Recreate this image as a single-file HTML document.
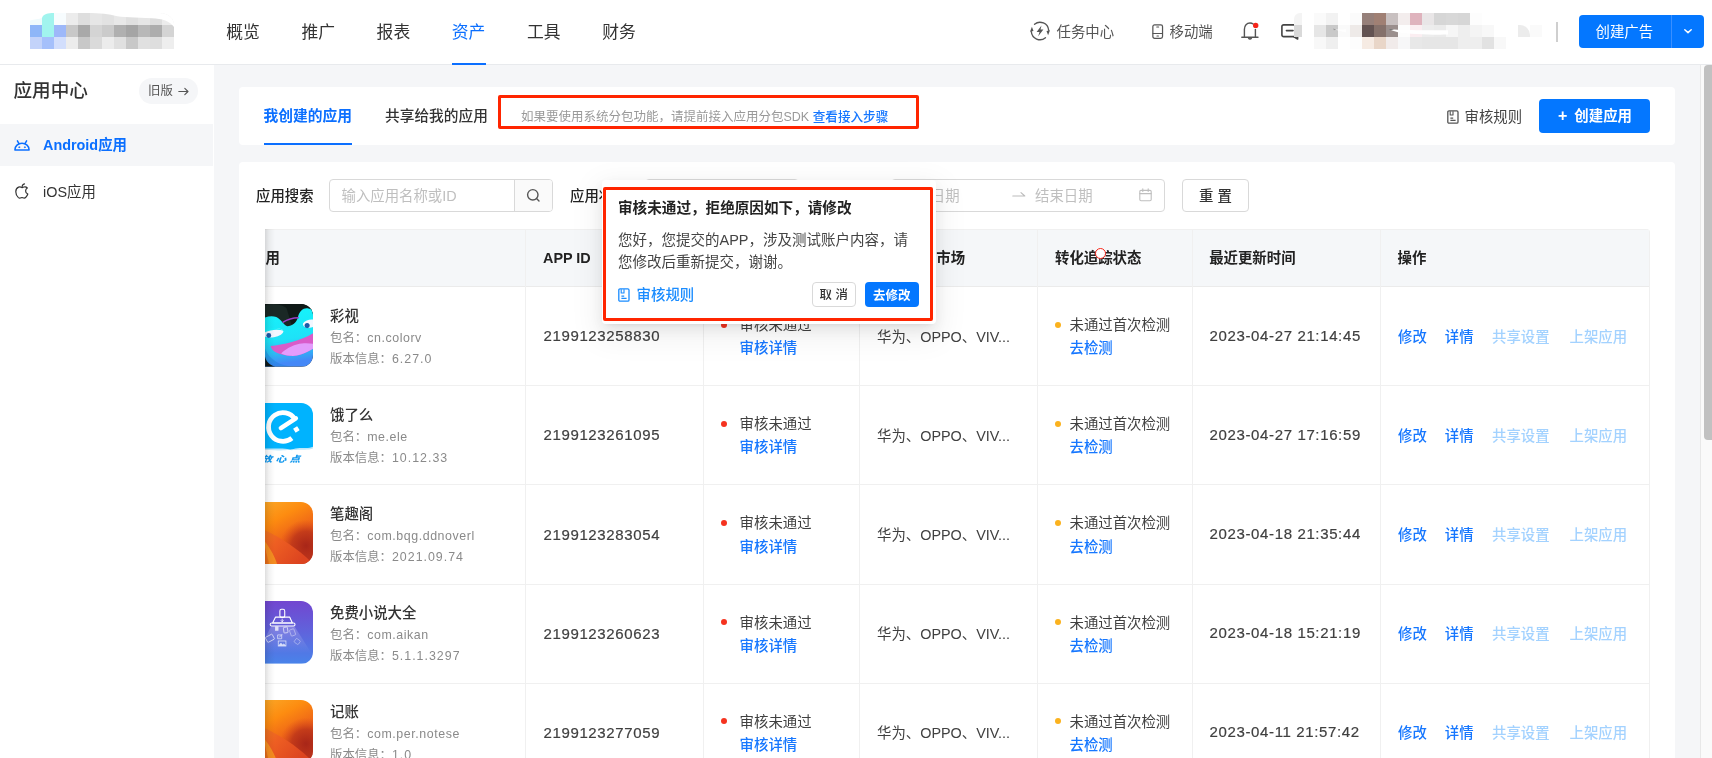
<!DOCTYPE html>
<html lang="zh-CN">
<head>
<meta charset="utf-8">
<title>应用中心</title>
<style>
*{box-sizing:border-box;margin:0;padding:0}
html,body{width:1712px;height:758px;overflow:hidden}
body{position:relative;background:#f5f6f8;font-family:"Liberation Sans","Noto Sans CJK SC",sans-serif;font-size:14px;color:#333;-webkit-font-smoothing:antialiased}
.abs{position:absolute}
.t{position:absolute;white-space:nowrap;line-height:20px;height:20px}
svg{display:block;overflow:visible}
/* header */
#hd{position:absolute;left:0;top:0;width:1712px;height:64px;background:#fff}
#hdline{position:absolute;left:0;top:64px;width:1712px;height:1px;background:#e8eaed}
.nav{position:absolute;top:20.6px;font-size:16.8px;line-height:24px;height:24px;color:#333;white-space:nowrap}
.nav.on{color:#0b6fff}
.px{position:absolute;width:12px;height:12px}
/* sidebar */
#sb{position:absolute;left:0;top:65px;width:214px;height:693px;background:#fff}
/* cards */
.card{position:absolute;background:#fff;border-radius:4px}
/* table */
#tb{position:absolute;left:265px;top:229px;width:1385px;height:529px;overflow:hidden;background:#fff;border-radius:0 4px 0 0}
.vl{position:absolute;top:0;width:1px;height:529px;background:#f0f0f0}
.hl{position:absolute;left:0;width:1385px;height:1px;background:#f0f0f0}
.th{position:absolute;top:19px;font-weight:700;font-size:14.4px;line-height:20px;color:#222;white-space:nowrap}
.row{position:absolute;left:0;width:1385px;height:99px;color:#404040}
.row .t{color:inherit}
.row .t.nm{font-size:14.4px;font-weight:500;color:#333}
.row .t.sub{font-size:12.4px;color:#8a8a8a}
.row .t.lnk,.t.lnk{color:#1677ff;font-weight:500}
.row .t.dis,.t.dis{color:#a3d2ff;font-weight:500}
.num{font-size:15px;letter-spacing:.63px;-webkit-text-stroke:.2px #404040}
.la{letter-spacing:.57px}
.la3{letter-spacing:1px}
.la2{}
.dot{position:absolute;width:6px;height:6px;border-radius:50%}
.ic{position:absolute;left:-14px;width:62px;height:62px;border-radius:12px;overflow:hidden}
</style>
</head>
<body>
<div id="app" style="position:absolute;left:0;top:0;width:1712px;height:758px;will-change:transform;overflow:hidden">
<div id="hd">
<div class="abs" style="left:30px;top:13px;width:144px;height:36px;overflow:hidden;border-radius:0 14px 0 0/0 12px 0 0">
<i class="px" style="left:0px;top:0px;width:12px;height:12px;background:#effafc;"></i>
<i class="px" style="left:12px;top:0px;width:12px;height:12px;background:#a1f4ee;"></i>
<i class="px" style="left:24px;top:0px;width:12px;height:12px;background:#f7fcfe;"></i>
<i class="px" style="left:36px;top:0px;width:12px;height:12px;background:#ececec;"></i>
<i class="px" style="left:48px;top:0px;width:12px;height:12px;background:#dedede;"></i>
<i class="px" style="left:60px;top:0px;width:12px;height:12px;background:#e6e6e6;"></i>
<i class="px" style="left:72px;top:0px;width:12px;height:12px;background:#e2e2e2;"></i>
<i class="px" style="left:84px;top:0px;width:12px;height:12px;background:#e8e8e8;"></i>
<i class="px" style="left:96px;top:0px;width:12px;height:12px;background:#e0e0e0;"></i>
<i class="px" style="left:108px;top:0px;width:12px;height:12px;background:#e6e6e6;"></i>
<i class="px" style="left:120px;top:0px;width:12px;height:12px;background:#dedede;"></i>
<i class="px" style="left:132px;top:0px;width:12px;height:12px;background:#ececec;"></i>
<i class="px" style="left:0px;top:12px;width:12px;height:12px;background:#8eb6f8;"></i>
<i class="px" style="left:12px;top:12px;width:12px;height:12px;background:#a1f4ee;"></i>
<i class="px" style="left:24px;top:12px;width:12px;height:12px;background:#9db8f9;"></i>
<i class="px" style="left:36px;top:12px;width:12px;height:12px;background:#c8c8c8;"></i>
<i class="px" style="left:48px;top:12px;width:12px;height:12px;background:#a9a9a9;"></i>
<i class="px" style="left:60px;top:12px;width:12px;height:12px;background:#d4d4d4;"></i>
<i class="px" style="left:72px;top:12px;width:12px;height:12px;background:#cbcbcb;"></i>
<i class="px" style="left:84px;top:12px;width:12px;height:12px;background:#b0b0b0;"></i>
<i class="px" style="left:96px;top:12px;width:12px;height:12px;background:#a5a5a5;"></i>
<i class="px" style="left:108px;top:12px;width:12px;height:12px;background:#b8b8b8;"></i>
<i class="px" style="left:120px;top:12px;width:12px;height:12px;background:#adadad;"></i>
<i class="px" style="left:132px;top:12px;width:12px;height:12px;background:#d4d4d4;"></i>
<i class="px" style="left:0px;top:24px;width:12px;height:12px;background:#c3d3fa;"></i>
<i class="px" style="left:12px;top:24px;width:12px;height:12px;background:#a5c0fb;"></i>
<i class="px" style="left:24px;top:24px;width:12px;height:12px;background:#d2defc;"></i>
<i class="px" style="left:36px;top:24px;width:12px;height:12px;background:#ececec;"></i>
<i class="px" style="left:48px;top:24px;width:12px;height:12px;background:#c8c8c8;"></i>
<i class="px" style="left:60px;top:24px;width:12px;height:12px;background:#dadada;"></i>
<i class="px" style="left:72px;top:24px;width:12px;height:12px;background:#ececec;"></i>
<i class="px" style="left:84px;top:24px;width:12px;height:12px;background:#e0e0e0;"></i>
<i class="px" style="left:96px;top:24px;width:12px;height:12px;background:#c8c8c8;"></i>
<i class="px" style="left:108px;top:24px;width:12px;height:12px;background:#e0e0e0;"></i>
<i class="px" style="left:120px;top:24px;width:12px;height:12px;background:#dedede;"></i>
<i class="px" style="left:132px;top:24px;width:12px;height:12px;background:#eeeeee;"></i>
<svg class="abs" style="left:0;top:0" width="144" height="14" viewBox="0 0 144 14"><path d="M0 0H144V14C140 8 132 5.5 122 5.2C106 4.6 92 4.5 84 2.5C76 0.3 66 0 52 0C40 0 34 0 24 0C18 0 13 1 12 5C9 6.5 4 6 0 7.5Z" fill="#fff"/></svg>
</div>
<span class="nav" style="left:226.2px">概览</span>
<span class="nav" style="left:301.4px">推广</span>
<span class="nav" style="left:376.6px">报表</span>
<span class="nav on" style="left:451.8px">资产</span>
<span class="nav" style="left:527.0px">工具</span>
<span class="nav" style="left:602.2px">财务</span>
<i class="abs" style="left:452px;top:62.7px;width:33.6px;height:2.4px;background:#0b6fff;z-index:2"></i>
<svg class="abs" style="left:1030px;top:21.4px" width="20" height="20" viewBox="0 0 20 20" fill="none" stroke="#555" stroke-width="1.35" stroke-linecap="round" stroke-linejoin="round">
<path d="M4.53 3.24A8.7 8.7 0 0 1 18.67 9.24"/><path d="M15.47 16.76A8.7 8.7 0 0 1 1.33 10.76"/>
<path d="M16.5 10.1L20 9.3L18.1 14.3Z" fill="#555" stroke="none"/><path d="M3.5 9.9L0 10.7L1.9 5.7Z" fill="#555" stroke="none"/>
<path d="M11.5 4.5L6.6 10.9H9.5L8.2 15.3L13.4 8.6H10.5Z" fill="#555" stroke="none"/></svg>
<span class="t" style="left:1056.5px;top:21.5px;font-size:14.4px;color:#555">任务中心</span>
<svg class="abs" style="left:1152.3px;top:23.8px" width="11.4" height="15.2" viewBox="0 0 12 16" fill="none" stroke="#555" stroke-width="1.3" stroke-linecap="round">
<rect x=".9" y=".9" width="10.2" height="14.2" rx="1.8"/><path d="M1 10H11" stroke-width="1.1"/><path d="M5 3.1H7M5.2 12.6H6.8" stroke-width="1.1"/></svg>
<span class="t" style="left:1169.5px;top:21.5px;font-size:14.4px;color:#555">移动端</span>
<svg class="abs" style="left:1241px;top:22px" width="18" height="18" viewBox="0 0 18 18" fill="none" stroke="#555" stroke-width="1.4" stroke-linecap="round" stroke-linejoin="round">
<path d="M.8 15.3H17"/><path d="M3.4 15.2V7.2C3.4 3.4 5.8 1 9 1C10.3 1 11.4 1.4 12.2 2"/><path d="M14.4 7.5V15.2"/><path d="M7.6 16.2A1.6 1.6 0 0 0 10.4 16.2"/>
<circle cx="14.7" cy="3.4" r="2.7" fill="#f5261a" stroke="none"/></svg>
<svg class="abs" style="left:1281px;top:23.5px" width="18" height="16" viewBox="0 0 18 16" fill="none" stroke="#444" stroke-width="1.6" stroke-linecap="round" stroke-linejoin="round">
<path d="M16.5 12.6H2.6A1.7 1.7 0 0 1 .9 10.9V2.6A1.7 1.7 0 0 1 2.6.9H17"/><path d="M5.4 6.6H12"/><path d="M13 12.8L16.6 15V12.6"/></svg>
<i class="px" style="left:1294px;top:13px;width:8px;height:12px;background:#f4f4f4;border-radius:6px 0 0 0"></i>
<i class="px" style="left:1314px;top:13px;width:12px;height:12px;background:#fafafa;"></i>
<i class="px" style="left:1326px;top:13px;width:12px;height:12px;background:#f2f2f2;"></i>
<i class="px" style="left:1350px;top:13px;width:12px;height:12px;background:#fbfbfb;"></i>
<i class="px" style="left:1362px;top:13px;width:12px;height:12px;background:#96807a;"></i>
<i class="px" style="left:1374px;top:13px;width:12px;height:12px;background:#a08074;"></i>
<i class="px" style="left:1386px;top:13px;width:12px;height:12px;background:#c8c0c0;"></i>
<i class="px" style="left:1398px;top:13px;width:12px;height:12px;background:#f3eded;"></i>
<i class="px" style="left:1410px;top:13px;width:12px;height:12px;background:#dfb3bd;"></i>
<i class="px" style="left:1422px;top:13px;width:12px;height:12px;background:#e9e6e7;"></i>
<i class="px" style="left:1434px;top:13px;width:12px;height:12px;background:#d6d6d6;"></i>
<i class="px" style="left:1446px;top:13px;width:12px;height:12px;background:#d8d8d8;"></i>
<i class="px" style="left:1458px;top:13px;width:12px;height:12px;background:#d6d6d6;"></i>
<i class="px" style="left:1470px;top:13px;width:12px;height:12px;background:#fdfdfd;"></i>
<i class="px" style="left:1294px;top:25px;width:8px;height:12px;background:#d9d9d9;border-radius:0"></i>
<i class="px" style="left:1314px;top:25px;width:12px;height:12px;background:#e6e6e6;"></i>
<i class="px" style="left:1326px;top:25px;width:12px;height:12px;background:#c9c9c9;"></i>
<i class="px" style="left:1338px;top:25px;width:12px;height:12px;background:#fafafa;"></i>
<i class="px" style="left:1350px;top:25px;width:12px;height:12px;background:#eeeae8;"></i>
<i class="px" style="left:1362px;top:25px;width:12px;height:12px;background:#635352;"></i>
<i class="px" style="left:1374px;top:25px;width:12px;height:12px;background:#85716b;"></i>
<i class="px" style="left:1386px;top:25px;width:12px;height:12px;background:#9b8f8d;"></i>
<i class="px" style="left:1398px;top:25px;width:12px;height:12px;background:#fdfdfd;"></i>
<i class="px" style="left:1410px;top:25px;width:12px;height:12px;background:#fbeef1;"></i>
<i class="px" style="left:1422px;top:25px;width:12px;height:12px;background:#ededed;"></i>
<i class="px" style="left:1434px;top:25px;width:12px;height:12px;background:#ebebeb;"></i>
<i class="px" style="left:1446px;top:25px;width:12px;height:12px;background:#f6f6f6;"></i>
<i class="px" style="left:1458px;top:25px;width:12px;height:12px;background:#eeeeee;"></i>
<i class="px" style="left:1470px;top:25px;width:12px;height:12px;background:#f4f4f4;"></i>
<i class="px" style="left:1482px;top:25px;width:12px;height:12px;background:#f8f8f8;"></i>
<i class="px" style="left:1518px;top:25px;width:12px;height:12px;background:#ececec;border-radius:0 10px 0 0"></i>
<i class="px" style="left:1530px;top:25px;width:12px;height:12px;background:#fafafa;"></i>
<i class="px" style="left:1314px;top:37px;width:12px;height:12px;background:#f8f8f8;"></i>
<i class="px" style="left:1326px;top:37px;width:12px;height:12px;background:#efefef;"></i>
<i class="px" style="left:1350px;top:37px;width:12px;height:12px;background:#fdfdfd;"></i>
<i class="px" style="left:1362px;top:37px;width:12px;height:12px;background:#f6ebe3;"></i>
<i class="px" style="left:1374px;top:37px;width:12px;height:12px;background:#e9d6c8;"></i>
<i class="px" style="left:1386px;top:37px;width:12px;height:12px;background:#f1ebea;"></i>
<i class="px" style="left:1398px;top:37px;width:12px;height:12px;background:#f7f7f8;"></i>
<i class="px" style="left:1410px;top:37px;width:12px;height:12px;background:#e8e8e8;"></i>
<i class="px" style="left:1422px;top:37px;width:12px;height:12px;background:#e6e6e6;"></i>
<i class="px" style="left:1434px;top:37px;width:12px;height:12px;background:#e6e6e6;"></i>
<i class="px" style="left:1446px;top:37px;width:12px;height:12px;background:#e6e6e6;"></i>
<i class="px" style="left:1458px;top:37px;width:12px;height:12px;background:#eeeeee;"></i>
<i class="px" style="left:1470px;top:37px;width:12px;height:12px;background:#eeeeee;"></i>
<i class="px" style="left:1482px;top:37px;width:12px;height:12px;background:#e2e2e2;"></i>
<i class="px" style="left:1494px;top:37px;width:12px;height:12px;background:#f8f8f8;"></i>
<svg class="abs" style="left:1386px;top:25px" width="80" height="12" viewBox="0 0 80 12"><path d="M2 4.2L8 4.5C20 5 40 5.6 62 5.2V9.6C44 10 24 9 12 7.2Z" fill="#fff"/><path d="M2 4.2L8 4.6L5 5.2Z" fill="#444"/></svg>
<svg class="abs" style="left:1326px;top:25px" width="20" height="12" viewBox="0 0 20 12"><path d="M7 3.6L10.5 4.6L8 5.2Z" fill="#999"/><path d="M9 4.6C12 5.4 15 7 20 7.4V4.2Z" fill="#fff" opacity=".7"/></svg>
<i class="abs" style="left:1556px;top:21.5px;width:1.5px;height:20px;background:#cfcfcf"></i>
<div class="abs" style="left:1579px;top:15px;width:125px;height:33px;background:#0477ff;border-radius:4px"></div>
<i class="abs" style="left:1671px;top:15px;width:1px;height:33px;background:#3a8fff"></i>
<span class="t" style="left:1595.5px;top:21.5px;font-size:14.4px;color:#fff">创建广告</span>
<svg class="abs" style="left:1683px;top:28px" width="10" height="7" viewBox="0 0 10 7" fill="none" stroke="#fff" stroke-width="1.5" stroke-linecap="round" stroke-linejoin="round"><path d="M1.8 1.8L5 4.6L8.2 1.8"/></svg>
</div><div id="hdline"></div>
<div id="sb">
<span class="t" style="left:13.5px;top:13px;font-size:18.6px;line-height:26px;height:26px;font-weight:500;color:#333">应用中心</span>
<div class="abs" style="left:139px;top:13px;width:58.5px;height:26px;border-radius:13px;background:#f5f6f8"></div>
<span class="t" style="left:148px;top:16px;font-size:12.4px;color:#555">旧版</span>
<svg class="abs" style="left:177.5px;top:22px" width="11" height="9" viewBox="0 0 11 9" fill="none" stroke="#555" stroke-width="1.1" stroke-linecap="round" stroke-linejoin="round"><path d="M.8 4.5H10M6.8 1.3L10 4.5L6.8 7.7"/></svg>
<div class="abs" style="left:0;top:59px;width:213px;height:42px;background:#f5f6f8"></div>
<svg class="abs" style="left:14px;top:75px" width="16" height="11" viewBox="0 0 16 11" fill="none" stroke="#0b6fff" stroke-width="1.5" stroke-linecap="round" stroke-linejoin="round">
<path d="M.9 10H15.1C15.1 6 12 3.3 8 3.3C4 3.3 .9 6 .9 10Z"/><path d="M3.4 .9L5 3.6M12.6 .9L11 3.6"/><circle cx="5.2" cy="7.2" r=".55" fill="#0b6fff" stroke-width=".6"/><circle cx="10.8" cy="7.2" r=".55" fill="#0b6fff" stroke-width=".6"/></svg>
<span class="t" style="left:43px;top:70px;font-size:14.4px;font-weight:700;color:#0b6fff">Android应用</span>
<svg class="abs" style="left:15px;top:118px" width="14" height="16" viewBox="0 0 14 16" fill="none" stroke="#333" stroke-width="1.2" stroke-linecap="round" stroke-linejoin="round">
<path d="M7 4.6C5.8 3.8 4.6 3.7 3.6 4.1C1.8 4.8 .8 6.7 .8 8.7C.8 11 2 13.4 3.4 14.6C4.3 15.3 5.2 15.2 6 14.8C6.7 14.5 7.3 14.5 8 14.8C8.8 15.2 9.8 15.3 10.6 14.5C11.6 13.6 12.4 12.3 12.8 11C11.4 10.4 10.6 9.3 10.6 7.9C10.6 6.6 11.3 5.6 12.3 5C11.4 3.9 9.9 3.6 8.8 4C8.1 4.3 7.6 4.9 7 4.6Z"/><path d="M7.2 3.6C7.2 2.2 8.1 1.1 9.5 .8"/></svg>
<span class="t" style="left:43px;top:116.5px;font-size:14.4px;color:#333">iOS应用</span>
</div>
<div class="card" style="left:239px;top:87px;width:1436px;height:58px"></div>
<span class="t" style="left:263.5px;top:106px;font-size:14.75px;font-weight:700;color:#0b6fff">我创建的应用</span>
<i class="abs" style="left:264px;top:143px;width:88px;height:2px;background:#0b6fff"></i>
<span class="t" style="left:385px;top:106px;font-size:14.7px;font-weight:500;color:#333">共享给我的应用</span>
<div class="abs" style="left:498px;top:95px;width:421px;height:34.4px;border:3px solid #ff2500;border-radius:2px"></div>
<span class="t" style="left:521px;top:107px;font-size:12.5px;color:#999">如果要使用系统分包功能，请提前接入应用分包SDK <b style="color:#1677ff;font-weight:500;font-size:12.6px">查看接入步骤</b></span>
<svg class="abs" style="left:1446.5px;top:110px" width="12" height="14" viewBox="0 0 12 14" fill="none" stroke="#555" stroke-width="1.3" stroke-linejoin="round"><rect x=".8" y=".8" width="10.2" height="12.4" rx="1.2"/><path d="M3.2 1.2V5H6V1.2" stroke-width="1.1"/><path d="M3.4 8.2H6.2M3.4 10.4H8.6" stroke-width="1.2"/></svg>
<span class="t" style="left:1464.5px;top:106.5px;font-size:14.4px;color:#444">审核规则</span>
<div class="abs" style="left:1539px;top:99px;width:111px;height:34px;background:#0477ff;border-radius:4px"></div>
<span class="t" style="left:1558px;top:106px;font-size:14.4px;font-weight:700;color:#fff"><span style="font-size:16px;margin-right:7px;position:relative;top:-0.5px">+</span>创建应用</span>
<div class="card" style="left:239px;top:162px;width:1436px;height:620px"></div>
<span class="t" style="left:256px;top:185.5px;font-size:14.4px;font-weight:500;color:#222">应用搜索</span>
<div class="abs" style="left:329px;top:179px;width:224.2px;height:32.5px;border:1px solid #d9d9d9;border-radius:4px;background:#fff;overflow:hidden"><i class="abs" style="left:183.6px;top:0;width:1px;height:32px;background:#d9d9d9"></i><i class="abs" style="left:184.6px;top:0;width:40px;height:32px;background:#fafafa"></i></div>
<span class="t" style="left:341.5px;top:185.5px;font-size:14.4px;color:#bfbfbf">输入应用名称或ID</span>
<svg class="abs" style="left:526px;top:188px" width="15" height="15" viewBox="0 0 15 15" fill="none" stroke="#555" stroke-width="1.4" stroke-linecap="round"><circle cx="6.8" cy="6.8" r="5.2"/><path d="M10.8 10.8L13 13"/></svg>
<span class="t" style="left:570px;top:185.5px;font-size:14.4px;font-weight:500;color:#222">应用状态</span>
<div class="abs" style="left:645px;top:178.5px;width:154px;height:33px;border:1px solid #d9d9d9;border-radius:4px;background:#fff"></div>
<div class="abs" style="left:891px;top:178.5px;width:274px;height:33px;border:1px solid #d9d9d9;border-radius:4px;background:#fff"></div>
<span class="t" style="left:902px;top:185.5px;font-size:14.4px;color:#bfbfbf">开始日期</span>
<svg class="abs" style="left:1011.5px;top:190px" width="14" height="8" viewBox="0 0 14 8" fill="none" stroke="#bbb" stroke-width="1.1" stroke-linecap="round" stroke-linejoin="round"><path d="M.8 6H12.8L9 2.6"/></svg>
<span class="t" style="left:1035px;top:185.5px;font-size:14.4px;color:#bfbfbf">结束日期</span>
<svg class="abs" style="left:1139px;top:188px" width="13" height="14" viewBox="0 0 13 14" fill="none" stroke="#bfbfbf" stroke-width="1.1" stroke-linecap="round" stroke-linejoin="round"><rect x=".8" y="2.4" width="11.4" height="10.4" rx="1.2"/><path d="M.8 5.6H12.2M3.8 .8V3.4M9.2 .8V3.4"/></svg>
<div class="abs" style="left:1182px;top:178.5px;width:67px;height:33px;border:1px solid #d9d9d9;border-radius:4px;background:#fff"></div>
<span class="t" style="left:1199px;top:185.5px;font-size:14.4px;font-weight:500;color:#333;word-spacing:0">重 置</span>
<div id="tb">
<div class="abs" style="left:0;top:0;width:1385px;height:57px;background:#f5f7f9;border-top:1px solid #f0f0f0"></div>
<span class="th" style="left:-14px">应用</span>
<span class="th" style="left:278px">APP ID</span>
<span class="th" style="left:456px">审核状态</span>
<span class="th" style="left:613.8px">应用上架市场</span>
<span class="th" style="left:790px">转化追踪状态</span>
<span class="th" style="left:944.2px">最近更新时间</span>
<span class="th" style="left:1132.5px">操作</span>
<i class="hl" style="top:57px;background:#ebebeb"></i>
<i class="vl" style="left:260px"></i>
<i class="vl" style="left:438px"></i>
<i class="vl" style="left:594px"></i>
<i class="vl" style="left:772px"></i>
<i class="vl" style="left:927px"></i>
<i class="vl" style="left:1115px"></i>
<i class="vl" style="left:1384px"></i>
<div class="row" style="top:58.0px">
<div class="ic" style="left:-14.3px;top:17px;width:62.6px;height:62.6px"><svg width="100%" height="100%" viewBox="0 0 62 62"><defs><linearGradient id="fg" x1="0" y1="0" x2="0.15" y2="1"><stop offset="0" stop-color="#14f6fb"/><stop offset=".6" stop-color="#1ee2f8"/><stop offset=".82" stop-color="#2cbaf5"/><stop offset="1" stop-color="#4488f7"/></linearGradient></defs>
<rect width="62" height="62" fill="#0f1917"/><circle cx="22" cy="24" r="24" fill="#1a2825"/><path d="M34 0H62V20H40Z" fill="#0f1917"/>
<path d="M0 24C6 15 18 10 25 13C30 15 32 21 35.8 22C41 22 45 19 46.5 13C48 6.5 52 3.6 56 4.2C59 4.7 61 6 62 7V62H0Z" fill="url(#fg)"/>
<path d="M14 44C18 55 28 61 42 62H14Z" fill="#1a7fd8" opacity=".4"/><path d="M14 52C15 57 18 60.5 24 62H14Z" fill="#0f1917"/>
<path d="M31.4 18.2Q39 13.4 47.4 13.6" stroke="#9a3fc6" stroke-width="1.5" fill="none"/>
<ellipse cx="22" cy="28.6" rx="10.2" ry="4.3" transform="rotate(-9 22 28.6)" fill="#f2f7ff"/><circle cx="17.6" cy="31.2" r="2.4" fill="#1b5aa8"/><path d="M12 27.5C16 22.5 27 22 32.5 26.5C26 24.6 18 25.4 12 29Z" fill="#18eef9"/>
<ellipse cx="58.5" cy="19" rx="7.2" ry="4.5" transform="rotate(-14 58.5 19)" fill="#f2f7ff"/><circle cx="55.6" cy="21.4" r="2.5" fill="#1b5aa8"/><path d="M51 17.6C54 13.4 59 12.4 62 13.4V15.4C58 14.8 54 16 51 19.4Z" fill="#18eef9"/>
<path d="M19.3 41.6C32 40 50 36.5 62 28.5V44C52 50.4 44 52 38.8 51.3C29 50.6 21 48 19.3 41.6Z" fill="#d95cc9"/>
<path d="M29.8 49C36 43 44 39.6 50.4 39.1C55 38.8 59 39 62 39.6V44C52 50.4 44 52 38.8 51.3C35 51 32 50.3 29.8 49Z" fill="#e39cfc"/></svg></div>
<span class="t nm" style="left:65px;top:19px">彩视</span>
<span class="t sub" style="left:65px;top:40.5px">包名：<span class="la">cn.colorv</span></span>
<span class="t sub" style="left:65px;top:62px">版本信息：<span class="la3">6.27.0</span></span>
<span class="t num" style="left:278.5px;top:39.4px">2199123258830</span>
<i class="dot" style="left:455.7px;top:35px;background:#f5331f"></i>
<span class="t" style="left:474.6px;top:28.3px;font-size:14.4px">审核未通过</span>
<span class="t lnk" style="left:474.6px;top:51.4px;font-size:14.4px">审核详情</span>
<span class="t mk" style="left:612px;top:39.8px;font-size:14.4px">华为、<span class="la2">OPPO</span>、<span class="la2">VIV...</span></span>
<i class="dot" style="left:789.7px;top:35px;background:#fbb21e"></i>
<span class="t" style="left:804.5px;top:28.3px;font-size:14.4px">未通过首次检测</span>
<span class="t lnk" style="left:804.5px;top:51.4px;font-size:14.4px">去检测</span>
<span class="t num" style="left:944.6px;top:39.1px">2023-04-27 21:14:45</span>
<span class="t lnk" style="left:1133px;top:39.5px;font-size:14.4px">修改</span>
<span class="t lnk" style="left:1179.8px;top:39.5px;font-size:14.4px">详情</span>
<span class="t dis" style="left:1227px;top:39.5px;font-size:14.4px">共享设置</span>
<span class="t dis" style="left:1304.5px;top:39.5px;font-size:14.4px">上架应用</span>
</div>
<div class="row" style="top:157.1px">
<div class="ic" style="left:-14.3px;top:16.7px;width:62.6px;height:62.6px"><svg width="100%" height="100%" viewBox="0 0 62 62"><rect width="62" height="62" fill="#fff"/><path d="M0 0H62V44.8C58 47 52 45.8 46 46.4C40 47 38 46.4 34 46.8C26 47.4 20 46 0 46.6Z" fill="#bfe8fb"/><path d="M0 0H62V43C58 45.2 52 44.2 46 44.8C42 45.2 40 46.8 36 45.6C30 44.6 20 45.2 0 45.2Z" fill="#00b3fe"/>
<path d="M43.6 16.2A14.2 14.2 0 1 0 40.5 34.8" fill="none" stroke="#fff" stroke-width="4.7"/><path d="M44.4 15.2L29.6 24.8" stroke="#fff" stroke-width="4.5" stroke-linecap="round"/><rect x="42.5" y="23.8" width="4.8" height="4.8" rx=".5" transform="rotate(-32 44.9 26.2)" fill="#fff"/>
<text transform="translate(10.5 58.2) scale(1 .78)" font-size="10.6" font-weight="900" font-style="italic" fill="#1499ee" letter-spacing="3.2" font-family="'Liberation Sans','Noto Sans CJK SC',sans-serif">放心点</text></svg></div>
<span class="t nm" style="left:65px;top:19px">饿了么</span>
<span class="t sub" style="left:65px;top:40.5px">包名：<span class="la">me.ele</span></span>
<span class="t sub" style="left:65px;top:62px">版本信息：<span class="la3">10.12.33</span></span>
<span class="t num" style="left:278.5px;top:39.4px">2199123261095</span>
<i class="dot" style="left:455.7px;top:35px;background:#f5331f"></i>
<span class="t" style="left:474.6px;top:28.3px;font-size:14.4px">审核未通过</span>
<span class="t lnk" style="left:474.6px;top:51.4px;font-size:14.4px">审核详情</span>
<span class="t mk" style="left:612px;top:39.8px;font-size:14.4px">华为、<span class="la2">OPPO</span>、<span class="la2">VIV...</span></span>
<i class="dot" style="left:789.7px;top:35px;background:#fbb21e"></i>
<span class="t" style="left:804.5px;top:28.3px;font-size:14.4px">未通过首次检测</span>
<span class="t lnk" style="left:804.5px;top:51.4px;font-size:14.4px">去检测</span>
<span class="t num" style="left:944.6px;top:39.1px">2023-04-27 17:16:59</span>
<span class="t lnk" style="left:1133px;top:39.5px;font-size:14.4px">修改</span>
<span class="t lnk" style="left:1179.8px;top:39.5px;font-size:14.4px">详情</span>
<span class="t dis" style="left:1227px;top:39.5px;font-size:14.4px">共享设置</span>
<span class="t dis" style="left:1304.5px;top:39.5px;font-size:14.4px">上架应用</span>
</div>
<div class="row" style="top:256.2px">
<div class="ic" style="left:-14.3px;top:16.7px;width:62.6px;height:62.6px"><svg width="100%" height="100%" viewBox="0 0 62 62"><defs><linearGradient id="og1" x1=".2" y1="0" x2=".75" y2="1"><stop offset="0" stop-color="#fba726"/><stop offset=".3" stop-color="#fd8c10"/><stop offset=".6" stop-color="#ee6418"/><stop offset="1" stop-color="#c03a1c"/></linearGradient><radialGradient id="or1" cx=".88" cy=".7" r=".42"><stop offset="0" stop-color="#a82618"/><stop offset=".55" stop-color="#b8301a" stop-opacity=".75"/><stop offset="1" stop-color="#d8481a" stop-opacity="0"/></radialGradient><linearGradient id="ow1" x1="0" y1="0" x2="1" y2=".6"><stop offset="0" stop-color="#f28a1c"/><stop offset=".5" stop-color="#ee5f22"/><stop offset="1" stop-color="#dc4420"/></linearGradient></defs>
<rect width="62" height="62" fill="url(#og1)"/><rect width="62" height="62" fill="url(#or1)"/>
<path d="M0 22C20 30 42 42 60 60L58 62H0Z" fill="url(#ow1)"/><path d="M10 34C18 44 24 54 26 62H16C16 52 14 42 10 34Z" fill="#f79a22" opacity=".8"/><path d="M0 30C10 38 16 50 18 62H0Z" fill="#e8701a" opacity=".9"/></svg></div>
<span class="t nm" style="left:65px;top:19px">笔趣阁</span>
<span class="t sub" style="left:65px;top:40.5px">包名：<span class="la">com.bqg.ddnoverl</span></span>
<span class="t sub" style="left:65px;top:62px">版本信息：<span class="la3">2021.09.74</span></span>
<span class="t num" style="left:278.5px;top:39.4px">2199123283054</span>
<i class="dot" style="left:455.7px;top:35px;background:#f5331f"></i>
<span class="t" style="left:474.6px;top:28.3px;font-size:14.4px">审核未通过</span>
<span class="t lnk" style="left:474.6px;top:51.4px;font-size:14.4px">审核详情</span>
<span class="t mk" style="left:612px;top:39.8px;font-size:14.4px">华为、<span class="la2">OPPO</span>、<span class="la2">VIV...</span></span>
<i class="dot" style="left:789.7px;top:35px;background:#fbb21e"></i>
<span class="t" style="left:804.5px;top:28.3px;font-size:14.4px">未通过首次检测</span>
<span class="t lnk" style="left:804.5px;top:51.4px;font-size:14.4px">去检测</span>
<span class="t num" style="left:944.6px;top:39.1px">2023-04-18 21:35:44</span>
<span class="t lnk" style="left:1133px;top:39.5px;font-size:14.4px">修改</span>
<span class="t lnk" style="left:1179.8px;top:39.5px;font-size:14.4px">详情</span>
<span class="t dis" style="left:1227px;top:39.5px;font-size:14.4px">共享设置</span>
<span class="t dis" style="left:1304.5px;top:39.5px;font-size:14.4px">上架应用</span>
</div>
<div class="row" style="top:355.3px">
<div class="ic" style="left:-14.3px;top:16.7px;width:62.6px;height:62.6px"><svg width="100%" height="100%" viewBox="0 0 62 62"><defs><linearGradient id="pg" x1="0" y1="0" x2="0" y2="1"><stop offset="0" stop-color="#7246d0"/><stop offset=".5" stop-color="#5f64dc"/><stop offset="1" stop-color="#4983ea"/></linearGradient><linearGradient id="pc" x1="0" y1="0" x2="0" y2="1"><stop offset="0" stop-color="#fff" stop-opacity=".22"/><stop offset="1" stop-color="#fff" stop-opacity="0"/></linearGradient></defs><rect width="62" height="62" fill="url(#pg)"/>
<path d="M20 25L6 52H60L43 25Z" fill="url(#pc)"/>
<g fill="none" stroke="#fff" stroke-width="1.1" stroke-linejoin="round"><rect x="28.6" y="8.2" width="4.8" height="8" rx="1.6"/><path d="M24.2 16L21.4 21.8H41L38.4 16Z"/><rect x="19" y="21.8" width="24.6" height="3" rx="1.5"/><path d="M30.9 17.5V20.4M29.6 19.2L30.9 20.6L32.2 19.2" stroke-width=".8"/></g>
<g fill="none" stroke="#fff" stroke-width=".8" opacity=".75"><rect x="24.2" y="25.6" width="2.6" height="3.4" fill="#fff"/><rect x="32.4" y="26" width="4" height="5.6" rx=".6" transform="rotate(-8 34 29)"/><rect x="38.8" y="28" width="4.6" height="6.4" rx=".6" transform="rotate(-20 41 31)" opacity=".6"/><rect x="15" y="34" width="7.6" height="5.6" rx=".6" transform="rotate(-28 19 37)"/><path d="M26.4 33.6H30.4V37.4H26.4ZM28 36L31 32.8" /><rect x="27" y="39.6" width="7.6" height="5" /><path d="M27 44.6L29.6 41.6L31.4 43.4L32.6 42.4L34.6 44.6" fill="#fff" stroke-width=".5"/><rect x="43.4" y="38" width="5" height="4.4" rx=".8" transform="rotate(35 46 40)" opacity=".55"/></g></svg></div>
<span class="t nm" style="left:65px;top:19px">免费小说大全</span>
<span class="t sub" style="left:65px;top:40.5px">包名：<span class="la">com.aikan</span></span>
<span class="t sub" style="left:65px;top:62px">版本信息：<span class="la3">5.1.1.3297</span></span>
<span class="t num" style="left:278.5px;top:39.4px">2199123260623</span>
<i class="dot" style="left:455.7px;top:35px;background:#f5331f"></i>
<span class="t" style="left:474.6px;top:28.3px;font-size:14.4px">审核未通过</span>
<span class="t lnk" style="left:474.6px;top:51.4px;font-size:14.4px">审核详情</span>
<span class="t mk" style="left:612px;top:39.8px;font-size:14.4px">华为、<span class="la2">OPPO</span>、<span class="la2">VIV...</span></span>
<i class="dot" style="left:789.7px;top:35px;background:#fbb21e"></i>
<span class="t" style="left:804.5px;top:28.3px;font-size:14.4px">未通过首次检测</span>
<span class="t lnk" style="left:804.5px;top:51.4px;font-size:14.4px">去检测</span>
<span class="t num" style="left:944.6px;top:39.1px">2023-04-18 15:21:19</span>
<span class="t lnk" style="left:1133px;top:39.5px;font-size:14.4px">修改</span>
<span class="t lnk" style="left:1179.8px;top:39.5px;font-size:14.4px">详情</span>
<span class="t dis" style="left:1227px;top:39.5px;font-size:14.4px">共享设置</span>
<span class="t dis" style="left:1304.5px;top:39.5px;font-size:14.4px">上架应用</span>
</div>
<div class="row" style="top:454.4px">
<div class="ic" style="left:-14.3px;top:16.7px;width:62.6px;height:62.6px"><svg width="100%" height="100%" viewBox="0 0 62 62"><defs><linearGradient id="og2" x1=".2" y1="0" x2=".75" y2="1"><stop offset="0" stop-color="#fba726"/><stop offset=".3" stop-color="#fd8c10"/><stop offset=".6" stop-color="#ee6418"/><stop offset="1" stop-color="#c03a1c"/></linearGradient><radialGradient id="or2" cx=".88" cy=".7" r=".42"><stop offset="0" stop-color="#a82618"/><stop offset=".55" stop-color="#b8301a" stop-opacity=".75"/><stop offset="1" stop-color="#d8481a" stop-opacity="0"/></radialGradient><linearGradient id="ow2" x1="0" y1="0" x2="1" y2=".6"><stop offset="0" stop-color="#f28a1c"/><stop offset=".5" stop-color="#ee5f22"/><stop offset="1" stop-color="#dc4420"/></linearGradient></defs>
<rect width="62" height="62" fill="url(#og2)"/><rect width="62" height="62" fill="url(#or2)"/>
<path d="M0 22C20 30 42 42 60 60L58 62H0Z" fill="url(#ow2)"/><path d="M10 34C18 44 24 54 26 62H16C16 52 14 42 10 34Z" fill="#f79a22" opacity=".8"/><path d="M0 30C10 38 16 50 18 62H0Z" fill="#e8701a" opacity=".9"/></svg></div>
<span class="t nm" style="left:65px;top:19px">记账</span>
<span class="t sub" style="left:65px;top:40.5px">包名：<span class="la">com.per.notese</span></span>
<span class="t sub" style="left:65px;top:62px">版本信息：<span class="la3">1.0</span></span>
<span class="t num" style="left:278.5px;top:39.4px">2199123277059</span>
<i class="dot" style="left:455.7px;top:35px;background:#f5331f"></i>
<span class="t" style="left:474.6px;top:28.3px;font-size:14.4px">审核未通过</span>
<span class="t lnk" style="left:474.6px;top:51.4px;font-size:14.4px">审核详情</span>
<span class="t mk" style="left:612px;top:39.8px;font-size:14.4px">华为、<span class="la2">OPPO</span>、<span class="la2">VIV...</span></span>
<i class="dot" style="left:789.7px;top:35px;background:#fbb21e"></i>
<span class="t" style="left:804.5px;top:28.3px;font-size:14.4px">未通过首次检测</span>
<span class="t lnk" style="left:804.5px;top:51.4px;font-size:14.4px">去检测</span>
<span class="t num" style="left:944.6px;top:39.1px">2023-04-11 21:57:42</span>
<span class="t lnk" style="left:1133px;top:39.5px;font-size:14.4px">修改</span>
<span class="t lnk" style="left:1179.8px;top:39.5px;font-size:14.4px">详情</span>
<span class="t dis" style="left:1227px;top:39.5px;font-size:14.4px">共享设置</span>
<span class="t dis" style="left:1304.5px;top:39.5px;font-size:14.4px">上架应用</span>
</div>
<i class="hl" style="top:156px"></i>
<i class="hl" style="top:255.33px"></i>
<i class="hl" style="top:354.67px"></i>
<i class="hl" style="top:454px"></i>
<div class="abs" style="left:0;top:0;width:10px;height:529px;background:linear-gradient(90deg,rgba(0,0,0,.13),rgba(0,0,0,.05) 40%,rgba(0,0,0,0))"></div>
</div>
<i class="abs" style="left:1094.5px;top:247.5px;width:11.5px;height:11.5px;border-radius:50%;border:1.2px solid #f5261a;background:#fff"></i>
<div class="abs" style="left:602px;top:180px;width:334px;height:144px;background:#fff;border-radius:4px;box-shadow:0 3px 6px -4px rgba(0,0,0,.12),0 6px 16px 0 rgba(0,0,0,.08),0 9px 28px 8px rgba(0,0,0,.05)"></div>
<div class="abs" style="left:603px;top:187px;width:330px;height:134px;border:3px solid #ff2500;border-radius:2px"></div>
<span class="t" style="left:618px;top:198px;font-size:14.6px;font-weight:700;color:#222">审核未通过，拒绝原因如下，请修改</span>
<span class="t" style="left:618px;top:229.5px;font-size:14.5px;color:#444">您好，您提交的<span class="la2">APP</span>，涉及测试账户内容，请</span>
<span class="t" style="left:618px;top:252.3px;font-size:14.5px;color:#444">您修改后重新提交，谢谢。</span>
<svg class="abs" style="left:618.4px;top:287.5px" width="12" height="14" viewBox="0 0 12 14" fill="none" stroke="#1a8cff" stroke-width="1.3" stroke-linejoin="round"><rect x=".8" y=".8" width="10.2" height="12.4" rx="1.2"/><path d="M3.2 1.2V5H6V1.2" stroke-width="1.1"/><path d="M3.4 8.2H6.2M3.4 10.4H8.6" stroke-width="1.2"/></svg>
<span class="t" style="left:636.6px;top:285px;font-size:14.4px;font-weight:500;color:#1a8cff">审核规则</span>
<div class="abs" style="left:811.6px;top:282.4px;width:44.4px;height:24.5px;border:1px solid #d9d9d9;border-radius:4px;background:#fff"></div>
<span class="t" style="left:819.6px;top:284.5px;font-size:12.4px;font-weight:500;color:#333">取 消</span>
<div class="abs" style="left:864.8px;top:282.2px;width:54.2px;height:24.7px;border-radius:4px;background:#0477ff"></div>
<span class="t" style="left:873px;top:285.6px;font-size:12.5px;font-weight:700;color:#fff">去修改</span>
<div class="abs" style="left:1700px;top:65px;width:12px;height:693px;background:#fafafa;border-left:1px solid #e8e8e8"></div>
<div class="abs" style="left:1704px;top:65px;width:12px;height:374.5px;background:#c1c1c1;border-radius:4px"></div>
</div>
</body>
</html>
